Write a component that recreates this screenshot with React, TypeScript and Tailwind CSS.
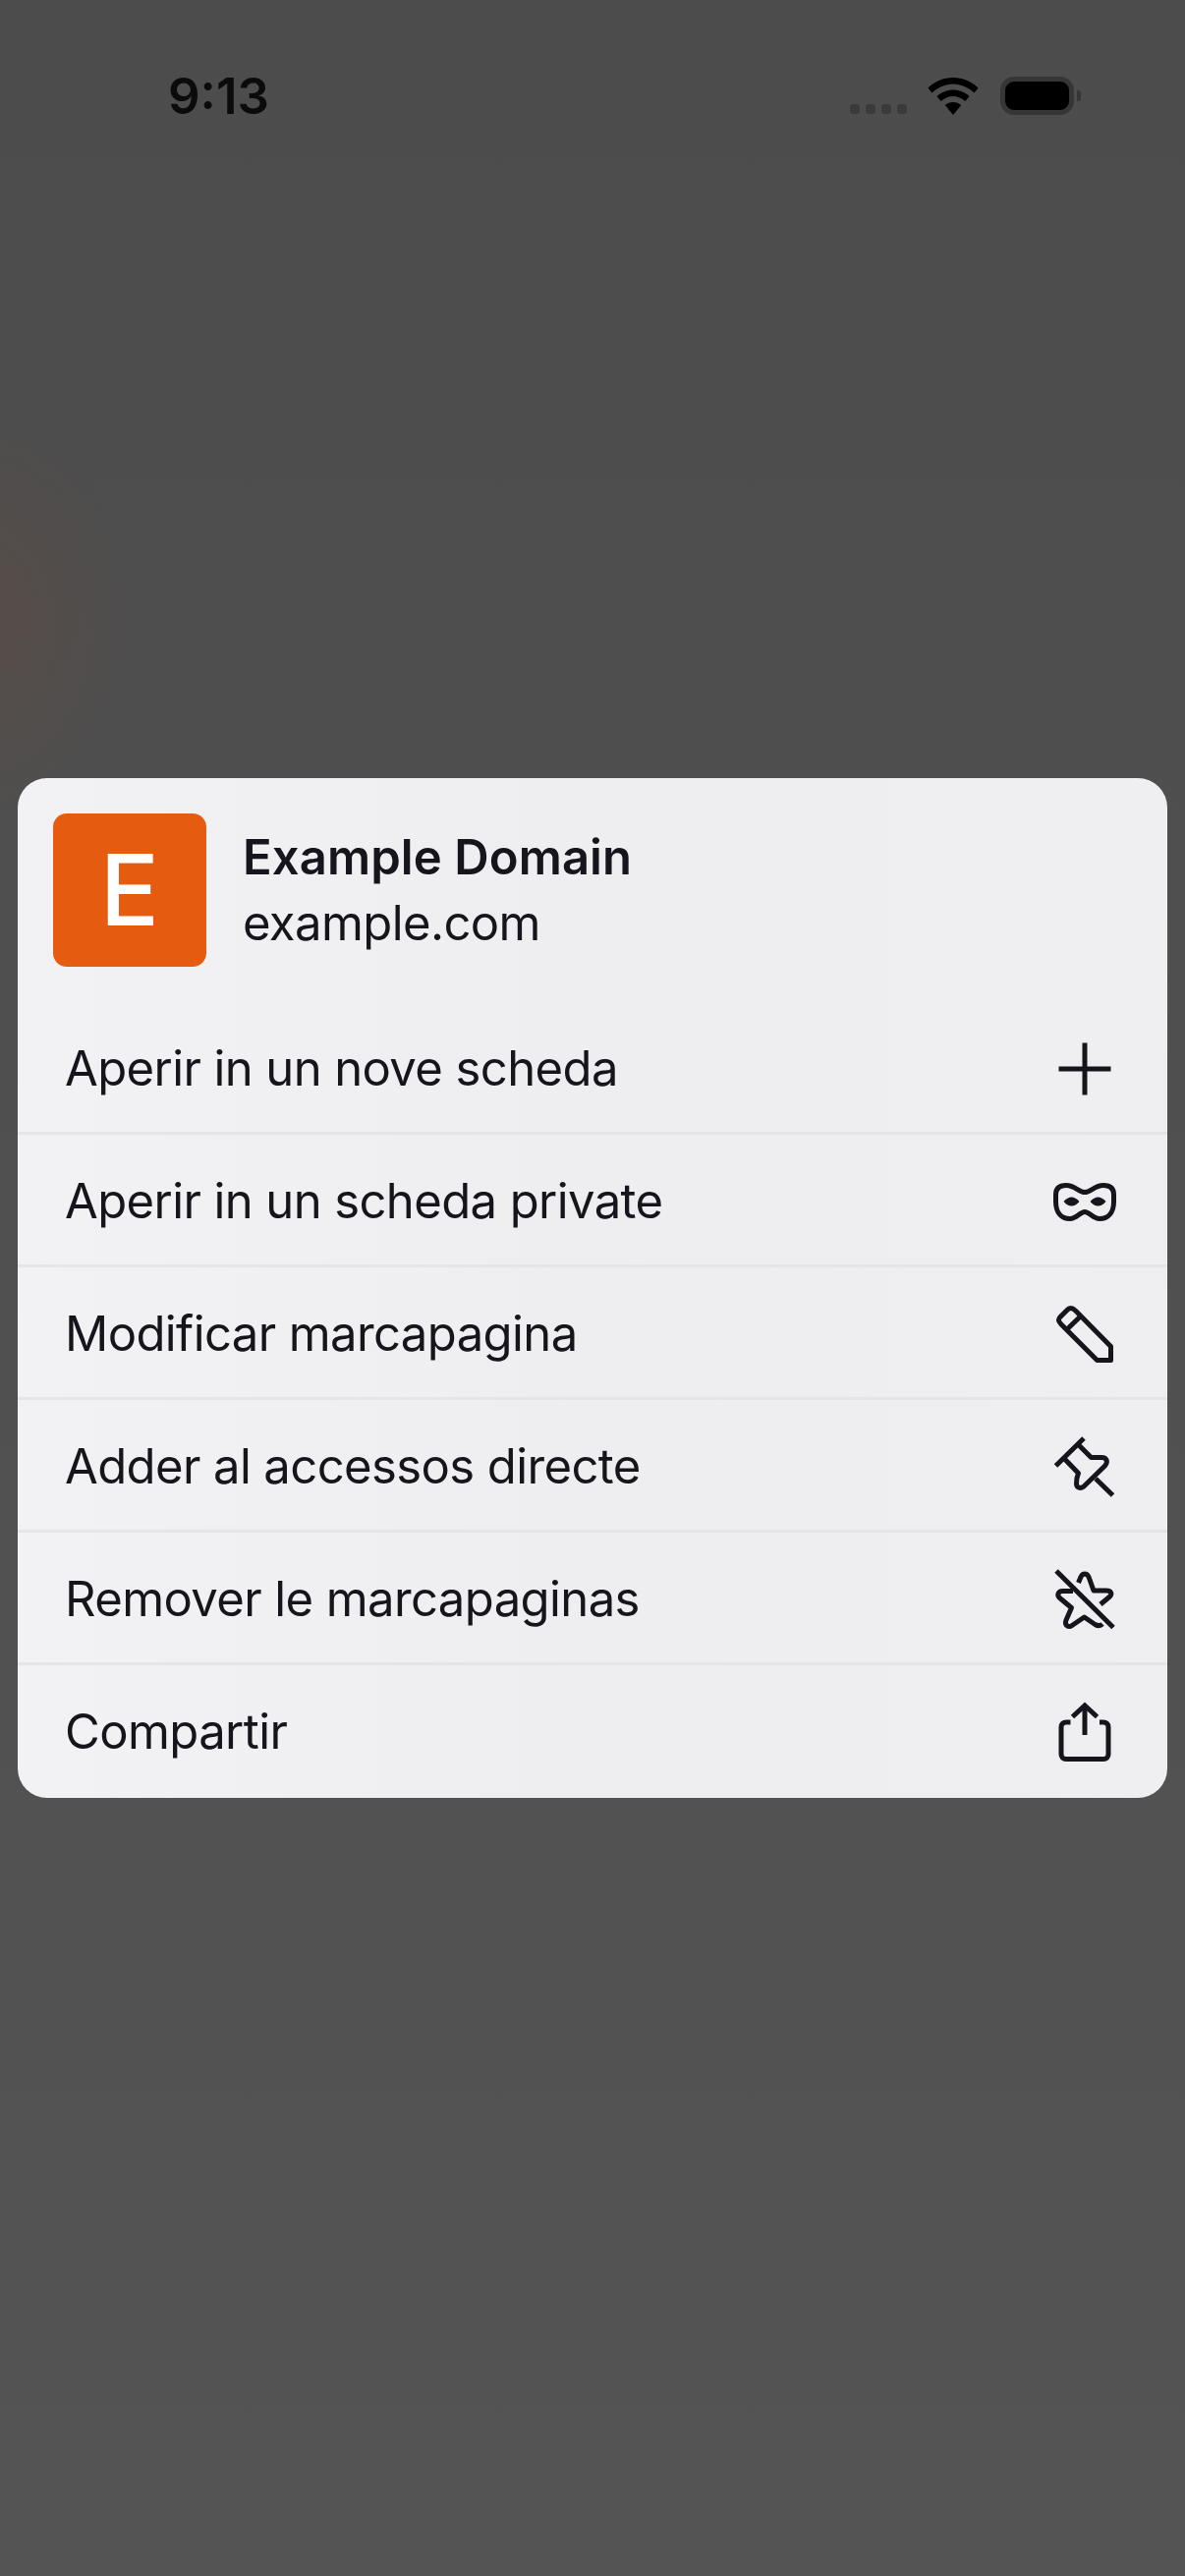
import React from 'react';

const Plus = () => (
  <svg width="64" height="64" viewBox="0 0 64 64" fill="none" stroke="#15151b" strokeWidth="5">
    <path d="M5.5 32H58.5M32 5.5V58.5" />
  </svg>
);

const Mask = () => (
  <svg width="64" height="64" viewBox="0 0 64 64" fill="none" stroke="#15151b" strokeWidth="5">
    <path d="M13 15.5C22 15.500 26 22.500 32 22.500C38 22.500 42 15.500 51 15.500C58 15.500 61.500 18.500 61.500 25V32C61.500 43 56 49.500 47 49.500C40 49.500 37 42.500 32 42.500C27 42.500 24 49.500 17 49.500C8 49.500 2.500 43 2.500 32V25C2.500 18.500 6 15.500 13 15.500Z" />
    <path d="M10.500 32C13 29 16 27.500 18.500 27.500C21 27.500 24 29 26.500 32C24 35 21 36.500 18.500 36.500C16 36.500 13 35 10.500 32Z" fill="#15151b" stroke="none" />
    <path d="M37.500 32C40 29 43 27.500 45.500 27.500C48 27.500 51 29 53.500 32C51 35 48 36.500 45.500 36.500C43 36.500 40 35 37.500 32Z" fill="#15151b" stroke="none" />
  </svg>
);

const Pencil = () => (
  <svg width="64" height="64" viewBox="0 0 64 64" fill="none" stroke="#15151b" strokeWidth="5" strokeLinejoin="round">
    <path d="M22.500 8L58.500 44.500V58.500H44.500L8 22C4.500 18.500 4.500 16.500 8 13.500L13.500 8C16.500 4.500 19 4.500 22.500 8Z" />
    <path d="M13.500 27.500L28 13.500" />
  </svg>
);

const Pin = () => (
  <svg width="64" height="64" viewBox="0 0 64 64" fill="none" stroke="#15151b" strokeWidth="5" strokeLinejoin="round">
    <path d="M2.500 31L31 3" />
    <path d="M11.500 24L25.500 38.500C24 42 23.500 46 23.500 49C23.500 53.500 27.500 54.500 31 52L52.500 31C56 27 54.500 22.500 49 22.500H38.500L25 9" />
    <path d="M43 44L60.500 61" />
  </svg>
);

const StarOff = () => (
  <svg width="64" height="64" viewBox="0 0 64 64" fill="none" stroke="#15151b" strokeWidth="5" strokeLinejoin="round">
    <path d="M3 3L61 60.500" />
    <path d="M25.500 15L28 9C30 5 34 5 36 9L41 23H54C59.500 23 60 27 57 29.500L48 37" />
    <path d="M20 23.500H9.500C4.500 23.500 3.500 28 6.500 30.500L18.500 40.500L13 53C11 58.500 15.500 61 19 58.500L31.500 50L42.500 57.500C46 59.500 48.500 58.500 50 57" />
  </svg>
);

const Share = () => (
  <svg width="64" height="64" viewBox="0 0 64 64" fill="none" stroke="#15151b" strokeWidth="5">
    <path d="M32 6V35" />
    <path d="M19.500 16.500L32 5L44.500 16.500" />
    <path d="M17.500 22H13C10 22 8 24 8 27V54.500C8 57.500 10 59.500 13 59.500H51C54 59.500 56 57.500 56 54.500V27C56 24 54 22 51 22H47" />
  </svg>
);

const Wifi = () => (
  <svg width="52" height="38" viewBox="0 0 52 38" fill="#000">
    <path d="M26 0C16 0 7.500 3.800 0.500 10.500L4.500 15.500C10.500 10 18 6.500 26 6.500C34 6.500 41.500 10 47.500 15.500L51.500 10.500C44.500 3.800 36 0 26 0Z" />
    <path d="M26 12.500C19.500 12.500 14 15 9.500 19L13.500 24C17 21 21.300 19 26 19C30.700 19 35 21 38.500 24L42.500 19C38 15 32.500 12.500 26 12.500Z" />
    <path d="M26 25C22.800 25 20 26.200 17.800 28L26 38L34.200 28C32 26.200 29.200 25 26 25Z" />
  </svg>
);

const items = [
  { label: 'Aperir in un nove scheda', icon: <Plus /> },
  { label: 'Aperir in un scheda private', icon: <Mask /> },
  { label: 'Modificar marcapagina', icon: <Pencil /> },
  { label: 'Adder al accessos directe', icon: <Pin /> },
  { label: 'Remover le marcapaginas', icon: <StarOff /> },
  { label: 'Compartir', icon: <Share /> },
];

export default function App() {
  return (
    <div className="relative h-[2622px] w-[1206px] overflow-hidden bg-gradient-to-b from-[#4c4c4c] to-[#545454] font-['Inter',sans-serif]">
      {/* faint page colour coming through the dimmed backdrop */}
      <div className="pointer-events-none absolute left-[-200px] top-[420px] h-[420px] w-[340px] bg-[radial-gradient(closest-side,rgba(120,72,52,0.22),rgba(120,72,52,0))]" />

      <div className="relative">
        {/* Status bar */}
        <div className="flex h-[160px] items-start pl-[171px] pr-[106px] pt-[68px]">
          <span className="text-[51px] font-semibold leading-[60px] text-[#0b0b0b]">9:13</span>
          <div className="ml-auto flex items-start">
            <div className="mt-[38px] flex gap-[6px]">
              <span className="h-[10px] w-[10px] rounded-[3px] bg-[#3b3b3b]" />
              <span className="h-[10px] w-[10px] rounded-[3px] bg-[#3b3b3b]" />
              <span className="h-[10px] w-[10px] rounded-[3px] bg-[#3b3b3b]" />
              <span className="h-[10px] w-[10px] rounded-[3px] bg-[#3b3b3b]" />
            </div>
            <div className="ml-[21px] mt-[11px]">
              <Wifi />
            </div>
            <div className="ml-[22px] mt-[10px] flex items-center">
              <div className="h-[39px] w-[75px] rounded-[14px] border-[5px] border-[#363636] bg-black" />
              <div className="ml-[3px] h-[11px] w-[4px] rounded-r-[3px] bg-[#363636]" />
            </div>
          </div>
        </div>

        {/* Context menu */}
        <div className="mx-[18px] mt-[632px] overflow-hidden rounded-[30px] bg-gradient-to-r from-[#f2f2f4] via-[#eeeef1] to-[#efeff2] pt-[36px]">
          <div className="flex items-center gap-[37px] pl-[36px]">
            <div className="flex h-[156px] w-[156px] items-center justify-center rounded-[14px] bg-[#e55c10] text-[100px] font-medium leading-none text-white">
              E
            </div>
            <div className="flex flex-col text-[#15151b]">
              <span className="text-[49px] font-semibold leading-[67px] tracking-[0.1px]">Example Domain</span>
              <span className="text-[49px] leading-[67px] tracking-[-0.6px]">example.com</span>
            </div>
          </div>

          <div className="mt-[36px]">
            {items.map((item, i) => (
              <div
                key={item.label}
                className={`flex h-[135px] items-center justify-between pl-[48px] pr-[52px] ${
                  i < items.length - 1 ? 'border-b-[3px] border-[#e5e5e9] pt-[3px]' : ''
                }`}
              >
                <span className="text-[49px] leading-none tracking-[-0.6px] text-[#15151b]">{item.label}</span>
                {item.icon}
              </div>
            ))}
          </div>
        </div>
      </div>
    </div>
  );
}
